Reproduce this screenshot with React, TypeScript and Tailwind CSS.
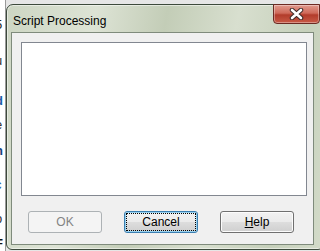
import React from "react";

// left edge of the window behind the dialog: only a sliver shows
function BackWindow() {
  const bits = [
    { h: 18, t: "", c: "" },
    { h: 14, t: "5", c: "text-[#222]" },
    { h: 36, t: "u", c: "text-[#333]" },
    { h: 40, t: "d", c: "text-[#1d5fa8] font-bold" },
    { h: 24, t: "e", c: "text-[#333]" },
    { h: 26, t: "n", c: "text-[#17457f] font-bold" },
    { h: 34, t: "c", c: "text-[#1d5fa8]" },
    { h: 34, t: "o", c: "text-[#333]" },
    { h: 25, t: "F", c: "text-[#111] font-bold" },
  ];
  return (
    <div className="w-[6px] h-full shrink-0 bg-white border-r border-[#9a9a9a] flex flex-col overflow-hidden">
      {bits.map((b, i) => (
        <div key={i} className="shrink-0 flex items-end overflow-hidden" style={{ height: b.h }}>
          <span className={`ml-[-5px] text-[13px] leading-[14px] ${b.c}`}>{b.t}</span>
        </div>
      ))}
    </div>
  );
}

function CloseButton() {
  return (
    <div className="w-[47px] h-[20px] mt-[-1px] rounded-b-[4px] border border-[#6b2a22] bg-[linear-gradient(#e19a8d_0%,#cf6a5a_45%,#b23c2b_55%,#c85a46_100%)] flex items-center justify-center shadow-[inset_0_0_0_1px_rgba(255,255,255,0.35)]">
      <svg width="15" height="12" viewBox="0 0 15 12">
        <path d="M3 2 L12 10 M12 2 L3 10" stroke="#3b2a28" strokeWidth="4.5" strokeLinecap="round" />
        <path d="M3 2 L12 10 M12 2 L3 10" stroke="#ffffff" strokeWidth="2.6" strokeLinecap="round" />
      </svg>
    </div>
  );
}

function DlgButton({
  children,
  variant,
}: {
  children: React.ReactNode;
  variant: "disabled" | "default" | "normal";
}) {
  if (variant === "disabled") {
    return (
      <div className="w-[74px] h-[22px] rounded-[3px] border border-[#adb2b5] bg-[#f4f4f4] flex items-center justify-center text-[12px] text-[#838383]">
        {children}
      </div>
    );
  }
  return (
    <div
      className={`w-[74px] h-[22px] rounded-[3px] border p-[1px] bg-[linear-gradient(#f2f2f2_0%,#ebebeb_48%,#dddddd_52%,#cfcfcf_100%)] ${
        variant === "default" ? "border-[#3c7fb1] shadow-[inset_0_0_0_1px_#98d1ef]" : "border-[#707070] shadow-[inset_0_0_0_1px_#fcfcfc]"
      }`}
    >
      <div
        className={`h-full flex items-center justify-center text-[12px] text-black ${
          variant === "default" ? "border border-dotted border-black" : ""
        }`}
      >
        {children}
      </div>
    </div>
  );
}

export default function App() {
  return (
    <div className="w-[320px] h-[251px] overflow-hidden flex bg-[#e6e6e6] font-['Liberation_Sans',Arial,sans-serif]">
      <BackWindow />
      <div className="w-[318px] shrink-0 mt-[4px] h-[246px] rounded-t-[7px] rounded-b-[6px] border border-[#3d4a3c] bg-[linear-gradient(100deg,#cdd6c3_0%,#dde3d5_25%,#c3cdb7_45%,#d8dfcf_65%,#c6d0bb_85%,#d3dbc9_100%)] flex flex-col px-[4px] pb-[4px] shadow-[inset_0_0_0_1px_rgba(255,255,255,0.5)]">
        <div className="h-[27px] shrink-0 flex items-start">
          <span className="ml-[2px] mt-[9px] text-[12px] leading-[14px] text-black">Script Processing</span>
          <div className="ml-auto mr-[-1px]">
            <CloseButton />
          </div>
        </div>
        <div className="w-[303px] flex-1 border border-[#7f8b7c] bg-[#f0f0f0] flex flex-col pt-[9px] pl-[9px]">
          <div className="w-[286px] h-[154px] border border-[#828790] bg-white" />
          <div className="flex mt-[15px] pl-[7px] gap-[22px]">
            <DlgButton variant="disabled">OK</DlgButton>
            <DlgButton variant="default">Cancel</DlgButton>
            <DlgButton variant="normal">
              <span>
                <span className="underline">H</span>elp
              </span>
            </DlgButton>
          </div>
        </div>
      </div>
    </div>
  );
}
